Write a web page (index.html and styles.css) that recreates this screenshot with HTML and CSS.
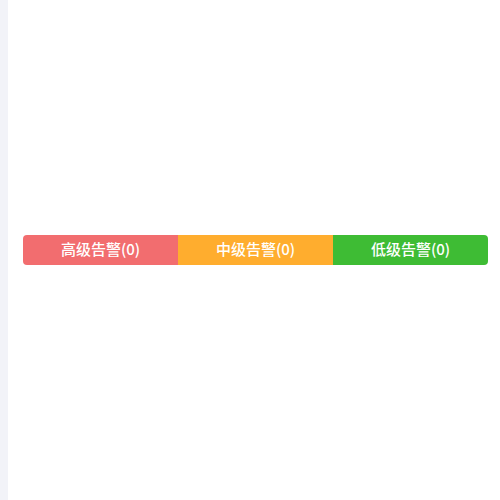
FILE: index.html
```html
<!DOCTYPE html>
<html>
<head>
<meta charset="utf-8">
<link rel="stylesheet" href="styles.css">
</head>
<body>
<div class="page">
  <div class="side"></div>
  <div class="main">
    <div class="bar">
      <div class="seg high">高级告警(0)</div>
      <div class="seg mid">中级告警(0)</div>
      <div class="seg low">低级告警(0)</div>
    </div>
  </div>
</div>
</body>
</html>
```
FILE: styles.css
```css
html, body { margin: 0; padding: 0; background: #fff; }
.page { display: flex; width: 500px; height: 500px; }
.side { width: 8px; background: #f2f3f8; }
.main { flex: 1; display: flex; align-items: center; padding: 0 12px 0 15px; }
.bar { flex: 1; display: flex; height: 30px; border-radius: 4px; overflow: hidden; }
.seg { flex: 1; display: flex; align-items: center; justify-content: center; color: #fff;
  font-family: "Noto Sans CJK SC", "Noto Sans", sans-serif; font-size: 15px; font-weight: 500;
  line-height: 1; padding-bottom: 4px; box-sizing: border-box; }
.high { background: #f26d6f; }
.mid { background: #ffad2e; }
.low { background: #3ebc34; }
```
